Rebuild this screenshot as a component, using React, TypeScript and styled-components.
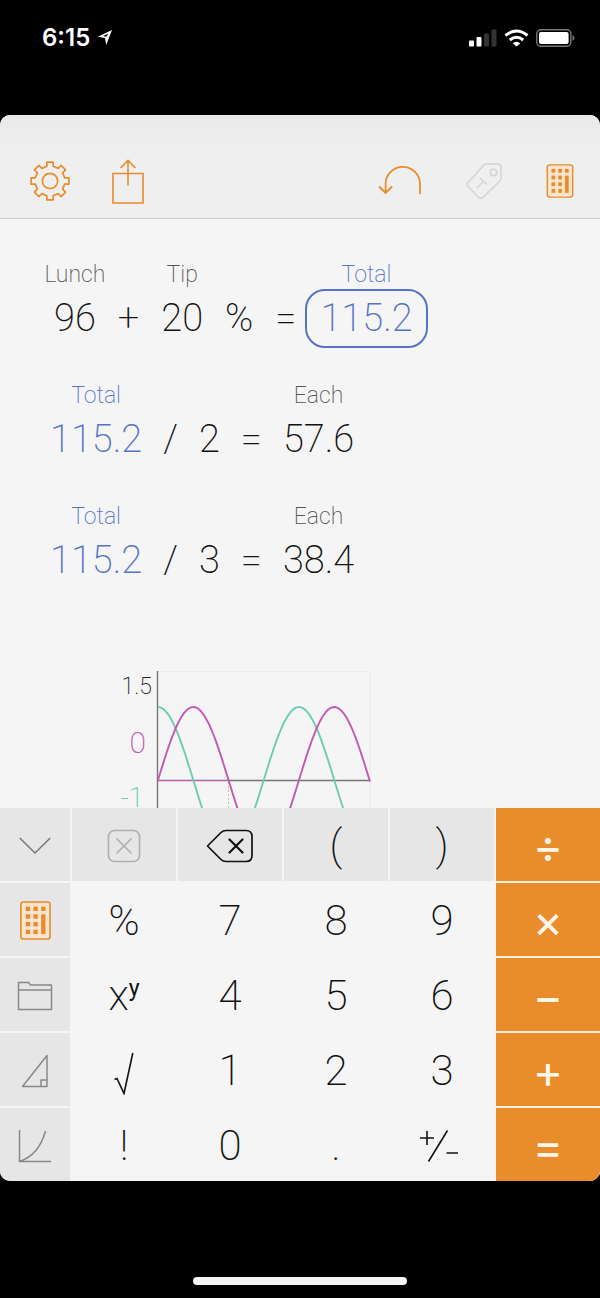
import React from 'react';
import styled, { createGlobalStyle, css } from 'styled-components';

const ORANGE = '#e88c2c';
const BLUE = '#5674c6';
const MAGENTA = '#c558b0';
const TEAL = '#6dccb4';

const GlobalStyle = createGlobalStyle`
  * { box-sizing: border-box; }
  body { margin: 0; background: #000; }
`;

const Screen = styled.div`
  display: flex;
  flex-direction: column;
  height: 100vh;
  background: #000;
  font-family: Roboto, "Liberation Sans", sans-serif;
  font-weight: 200;
  color: #111;
`;

const StatusBar = styled.header`
  display: flex;
  justify-content: space-between;
  align-items: center;
  height: 75px;
  margin-bottom: 40px;
  padding: 0 25px 0 42px;
  color: #fff;
`;

const StatusGroup = styled.div`
  display: flex;
  align-items: center;
  gap: 7px;
`;

const Clock = styled.time`
  font-family: Inter, sans-serif;
  font-size: 24px;
  font-weight: 600;
  line-height: 28px;
`;

const Sheet = styled.main`
  display: flex;
  flex: 1;
  flex-direction: column;
  min-height: 0;
  overflow: hidden;
  border-radius: 10px;
  background: #f5f5f5;
`;

const Toolbar = styled.nav`
  display: flex;
  justify-content: space-between;
  padding: 44px 18px 15px 28px;
  border-bottom: 1px solid #cfcfcf;
  background: linear-gradient(#e9e9e9, #efefef 32px);
`;

const ToolGroup = styled.div`
  display: flex;
  gap: 34px;
`;

const ToolButton = styled.button<{ $width?: number }>`
  display: grid;
  place-items: center;
  width: ${(p) => p.$width ?? 44}px;
  height: 44px;
  padding: 0;
  border: 0;
  background: none;
  color: ${ORANGE};

  &:disabled { color: #d3d3d3; }
`;

const Canvas = styled.section`
  flex: 1 1 0;
  min-height: 0;
  overflow: hidden;
  padding-top: 40px;
`;

const Expression = styled.div<{ $indent: number; $gap: number }>`
  display: flex;
  align-items: flex-end;
  gap: ${(p) => p.$gap}px;
  height: 89px;
  margin-bottom: 32px;
  padding-left: ${(p) => p.$indent}px;
`;

const Token = styled.div<{ $linked?: boolean }>`
  display: flex;
  flex-direction: column;
  align-items: center;
  color: ${(p) => (p.$linked ? BLUE : '#111')};
`;

const TokenLabel = styled.span<{ $linked?: boolean }>`
  margin: 0 -20px;
  font-size: 23px;
  line-height: 28px;
  color: ${(p) => (p.$linked ? BLUE : '#555')};
`;

const TokenValue = styled.span<{ $selected?: boolean }>`
  font-size: 38px;
  line-height: 59px;
  ${(p) =>
    p.$selected &&
    css`
      margin: 0 -13px;
      padding: 0 13px;
      border: 2px solid ${BLUE};
      border-radius: 20px;
      line-height: 55px;
    `}
`;

const Chart = styled.svg`
  display: block;
  margin: 81px 0 0 110px;
`;

const Keypad = styled.section`
  display: grid;
  grid-template-columns: 70px repeat(5, 1fr);
  grid-auto-rows: 73px;
  gap: 2px;
`;

type KeyKind = 'side' | 'top' | 'number' | 'operator';

const keyStyles = {
  side: css`background: #e6e6e6; color: #888;`,
  top: css`background: #e6e6e6;`,
  number: css`background: #f5f5f5;`,
  operator: css`
    padding-top: 2px;
    background: ${ORANGE};
    box-shadow: 0 2px 0 #fdf1e2;
    color: #fff6ea;
    font-family: Inter, sans-serif;
    font-size: 46px;
    font-weight: 400;
  `,
};

const Key = styled.button<{ $kind: KeyKind }>`
  display: flex;
  align-items: center;
  justify-content: center;
  padding: 2px 0 0;
  border: 0;
  color: #111;
  font-family: inherit;
  font-size: 42px;
  font-weight: 200;
  line-height: 48px;
  ${(p) => keyStyles[p.$kind]}

  &:disabled { color: #b0b0b0; }
`;

const Exponent = styled.sup`
  align-self: flex-start;
  margin-top: 14px;
  font-size: 23px;
  font-weight: 400;
  line-height: 30px;
`;

const HomeArea = styled.footer`
  display: flex;
  align-items: flex-end;
  justify-content: center;
  height: 117px;
  padding-bottom: 13px;
`;

const HomeIndicator = styled.div`
  width: 214px;
  height: 8px;
  border-radius: 4px;
  background: #f5f5f5;
`;

const gearPoints = Array.from({ length: 8 }, (_, i) => {
  const a = (i * Math.PI) / 4;
  return [[14, -3], [18, -3], [18, 3], [14, 3]]
    .map(([x, y]) => [
      (20 + x * Math.cos(a) - y * Math.sin(a)).toFixed(1),
      (20 + x * Math.sin(a) + y * Math.cos(a)).toFixed(1),
    ].join(','))
    .join(' ');
}).join(' ');

const GearIcon = () => (
  <svg width="42" height="42" viewBox="0 0 40 40" fill="none" stroke="currentColor" strokeWidth="1.6" strokeLinejoin="round">
    <polygon points={gearPoints} />
    <circle cx="20" cy="20" r="7.3" />
  </svg>
);

const ShareIcon = () => (
  <svg width="34" height="46" viewBox="0 0 34 46" fill="none" stroke="currentColor" strokeWidth="1.6">
    <path d="M2 14.500h30v29.500h-30zM17 26.500V2.500M9.500 9l7.500-7.500 7.500 7.500" />
  </svg>
);

const UndoIcon = () => (
  <svg width="44" height="32" viewBox="0 0 44 32" fill="none" stroke="currentColor" strokeWidth="1.800">
    <path d="M42 29V19a17.200 17.200 0 0 0-34.400 0v9M1 21.500l6.600 6.500 6.600-6.500" />
  </svg>
);

const TagIcon = () => (
  <svg width="38" height="38" viewBox="0 0 38 38" fill="none" stroke="currentColor" strokeWidth="1.500" strokeLinejoin="round">
    <path d="M21 2h12q3 0 3 3v11q0 2-1.500 3.500L18 35.500q-2 2-4 0L3 24.500q-2-2 0-4L18.500 3.500Q19.500 2 21 2zM15 16l7 6.500M18.500 19.200L12 26" />
    <circle cx="28.500" cy="10.500" r="3.200" />
  </svg>
);

const CalculatorIcon = ({ size }: { size: number }) => (
  <svg width={size} height={size} viewBox="0 0 38 38" fill={ORANGE}>
    <rect x="4.800" y="1" width="28.400" height="36" rx="2.500" fill="#fae4cd" stroke={ORANGE} strokeWidth="1.600" />
    {[5.500, 13, 20.500, 28].map((y) =>
      [9.500, 17, 24.500]
        .filter((x) => x < 20 || y < 10)
        .map((x) => <rect key={`${x}-${y}`} x={x} y={y} width="4.200" height="4.200" />),
    )}
    <rect x="24.500" y="13" width="4.200" height="19.200" />
  </svg>
);

const LocationIcon = () => (
  <svg width="16" height="17" viewBox="0 0 16 17">
    <path d="M15 1L9.200 16 8 9 .8 7.800z" fill="#fff" />
    <path d="M11.500 4.500L9 7.800 6 7z" fill="#000" />
  </svg>
);

const SignalIcon = () => (
  <svg width="28" height="18" viewBox="0 0 28 18" fill="#fff">
    <rect x="0" y="11.500" width="5" height="6" rx="1" />
    <rect x="7.500" y="8" width="5" height="9.500" rx="1" />
    <rect x="15" y="4.500" width="5" height="13" rx="1" fill="#333" />
    <rect x="22.500" y="0.500" width="5" height="17" rx="1" fill="#333" />
  </svg>
);

const WifiIcon = () => (
  <svg width="25" height="18" viewBox="0 0 25 18" fill="none" stroke="#fff" strokeWidth="3">
    <path d="M1.500 6.500Q12.500-2.500 23.500 6.500M5.800 11Q12.500 5.500 19.200 11" />
    <path d="M12.500 17.500l-3.800-3.300q3.800-3 7.600 0z" fill="#fff" stroke="none" />
  </svg>
);

const BatteryIcon = () => (
  <svg width="39" height="18" viewBox="0 0 39 18">
    <rect x="0.800" y="0.800" width="34" height="16.400" rx="4" fill="none" stroke="#777" strokeWidth="1.400" />
    <rect x="3" y="3" width="29.600" height="12" rx="2" fill="#fff" />
    <path d="M36.500 6q2 1 2 3t-2 3z" fill="#777" />
  </svg>
);

const ChevronIcon = () => (
  <svg width="32" height="18" viewBox="0 0 32 18" fill="none" stroke="#777" strokeWidth="1.500">
    <path d="M.8 1L16 16 31.200 1" />
  </svg>
);

const ClearIcon = () => (
  <svg width="34" height="34" viewBox="0 0 34 34" fill="none" stroke="currentColor" strokeWidth="1.700" strokeLinecap="round">
    <rect x="1.500" y="1.500" width="31" height="31" rx="6" />
    <path d="M10 10l14 14M24 10L10 24" />
  </svg>
);

const BackspaceIcon = () => (
  <svg width="48" height="34" viewBox="0 0 48 34" fill="none" stroke="currentColor" strokeWidth="1.700" strokeLinecap="round" strokeLinejoin="round">
    <path d="M20 1.500h20q6 0 6 6v19q0 6-6 6H20q-3 0-5-2L1.500 17 15 3.500q2-2 5-2z" />
    <path d="M23.500 10.500l13 13M36.500 10.500l-13 13" strokeWidth="2.200" />
  </svg>
);

const FolderIcon = () => (
  <svg width="36" height="30" viewBox="0 0 36 30" fill="none" stroke="currentColor" strokeWidth="1.500" strokeLinejoin="round">
    <path d="M1.500 28.500v-27h10l2 2.500h21v24.500zM1.500 9h33" />
  </svg>
);

const TriangleIcon = () => (
  <svg width="28" height="34" viewBox="0 0 28 34" fill="none" stroke="currentColor" strokeWidth="1.500" strokeLinejoin="round">
    <path d="M26 1.500v31H1.500zM20 32.500v-6.500h6" />
  </svg>
);

const CurveIcon = () => (
  <svg width="34" height="34" viewBox="0 0 34 34" fill="none" stroke="currentColor" strokeWidth="1.500">
    <path d="M1.500 1v31.500H33M1.500 32.500Q21 26 27.500 2" />
  </svg>
);

const RootIcon = () => (
  <svg width="22" height="48" viewBox="0 -5 22 48" fill="none" stroke="currentColor" strokeWidth="1.600">
    <path d="M1.500 27.500l2.500-1 7 15L19.800 1" />
  </svg>
);

const SignIcon = () => (
  <svg width="46" height="34" viewBox="0 0 46 34" fill="none" stroke="currentColor" strokeWidth="1.600">
    <path d="M1 9h14M8 2v14M9.500 32.500L28.500 1.500M27.500 24H39" />
  </svg>
);

// Axis origin of the plot, its period and amplitude, in chart units.
const ORIGIN = { x: 48, y: 109 };
const PERIOD = 141;
const AMPLITUDE = 73;
const PLOT_WIDTH = 212;

const curve = (fn: (t: number) => number) =>
  Array.from({ length: PLOT_WIDTH / 2 + 1 }, (_, i) => {
    const x = i * 2;
    const y = ORIGIN.y - AMPLITUDE * fn((x / PERIOD) * 2 * Math.PI);
    return `${i ? 'L' : 'M'}${ORIGIN.x + x} ${y.toFixed(1)}`;
  }).join('');

const TrigChart = () => (
  <Chart width="270" height="220" viewBox="0 0 270 220" role="img" aria-label="Sine and cosine plot">
    <path d="M48 .5h212v219H48" fill="none" stroke="#ebebeb" />
    <path d="M47.500 0v219M47.500 109.500H260" fill="none" stroke="#777" strokeWidth="1.400" />
    <path d="M48 109.500h71" stroke={MAGENTA} />
    <path d="M118.500 111v108" stroke="#a8d890" strokeDasharray="2 2" />
    <path d={curve(Math.cos)} fill="none" stroke={TEAL} strokeWidth="1.900" />
    <path d={curve(Math.sin)} fill="none" stroke={MAGENTA} strokeWidth="1.900" />
    <text x="42" y="23" fontSize="23" textAnchor="end" fill="#222">1.5</text>
    <text x="36" y="82" fontSize="30" textAnchor="end" fill={MAGENTA}>0</text>
    <text x="34" y="136" fontSize="28" textAnchor="end" fill={TEAL}>-1</text>
  </Chart>
);

type TokenData = { value: string; label?: string; linked?: boolean; selected?: boolean };

const expressions: { indent: number; gap: number; tokens: TokenData[] }[] = [
  {
    indent: 54,
    gap: 22,
    tokens: [
      { value: '96', label: 'Lunch' },
      { value: '+' },
      { value: '20', label: 'Tip' },
      { value: '%' },
      { value: '=' },
      { value: '115.2', label: 'Total', linked: true, selected: true },
    ],
  },
  ...[['2', '57.6'], ['3', '38.4']].map(([people, each]) => ({
    indent: 50,
    gap: 21,
    tokens: [
      { value: '115.2', label: 'Total', linked: true },
      { value: '/' },
      { value: people },
      { value: '=' },
      { value: each, label: 'Each' },
    ],
  })),
];

type KeyData = { kind: KeyKind; name: string; face: React.ReactNode; disabled?: boolean };

const side = (name: string, face: React.ReactNode): KeyData => ({ kind: 'side', name, face });
const top = (name: string, face: React.ReactNode, disabled = false): KeyData => ({ kind: 'top', name, face, disabled });
const num = (name: string, face: React.ReactNode = name): KeyData => ({ kind: 'number', name, face });
const op = (name: string, face: string): KeyData => ({ kind: 'operator', name, face });

const keys: KeyData[] = [
  side('Hide keypad', <ChevronIcon />),
  top('Clear', <ClearIcon />, true),
  top('Delete', <BackspaceIcon />),
  top('Open bracket', '('),
  top('Close bracket', ')'),
  op('Divide', '÷'),
  side('Basic keys', <CalculatorIcon size={39} />),
  num('%'), num('7'), num('8'), num('9'),
  op('Multiply', '×'),
  side('Saved items', <FolderIcon />),
  num('Power', <>x<Exponent>y</Exponent></>),
  num('4'), num('5'), num('6'),
  op('Subtract', '−'),
  side('Trigonometry', <TriangleIcon />),
  num('Square root', <RootIcon />),
  num('1'), num('2'), num('3'),
  op('Add', '+'),
  side('Graphs', <CurveIcon />),
  num('!'), num('0'), num('.'),
  num('Change sign', <SignIcon />),
  op('Equals', '='),
];

export default function App() {
  return (
    <Screen>
      <GlobalStyle />
      <StatusBar>
        <StatusGroup>
          <Clock>6:15</Clock>
          <LocationIcon />
        </StatusGroup>
        <StatusGroup>
          <SignalIcon />
          <WifiIcon />
          <BatteryIcon />
        </StatusGroup>
      </StatusBar>
      <Sheet>
        <Toolbar>
          <ToolGroup>
            <ToolButton aria-label="Settings"><GearIcon /></ToolButton>
            <ToolButton aria-label="Share"><ShareIcon /></ToolButton>
          </ToolGroup>
          <ToolGroup>
            <ToolButton aria-label="Undo" $width={60}><UndoIcon /></ToolButton>
            <ToolButton aria-label="Label" $width={40} disabled><TagIcon /></ToolButton>
            <ToolButton aria-label="Keypad"><CalculatorIcon size={34} /></ToolButton>
          </ToolGroup>
        </Toolbar>
        <Canvas>
          {expressions.map(({ indent, gap, tokens }, row) => (
            <Expression key={row} $indent={indent} $gap={gap}>
              {tokens.map((t, i) => (
                <Token key={i} $linked={t.linked}>
                  {t.label && <TokenLabel $linked={t.linked}>{t.label}</TokenLabel>}
                  <TokenValue $selected={t.selected}>{t.value}</TokenValue>
                </Token>
              ))}
            </Expression>
          ))}
          <TrigChart />
        </Canvas>
        <Keypad aria-label="Keypad">
          {keys.map((k) => (
            <Key key={k.name} $kind={k.kind} aria-label={k.name} disabled={k.disabled}>
              {k.face}
            </Key>
          ))}
        </Keypad>
      </Sheet>
      <HomeArea>
        <HomeIndicator />
      </HomeArea>
    </Screen>
  );
}
